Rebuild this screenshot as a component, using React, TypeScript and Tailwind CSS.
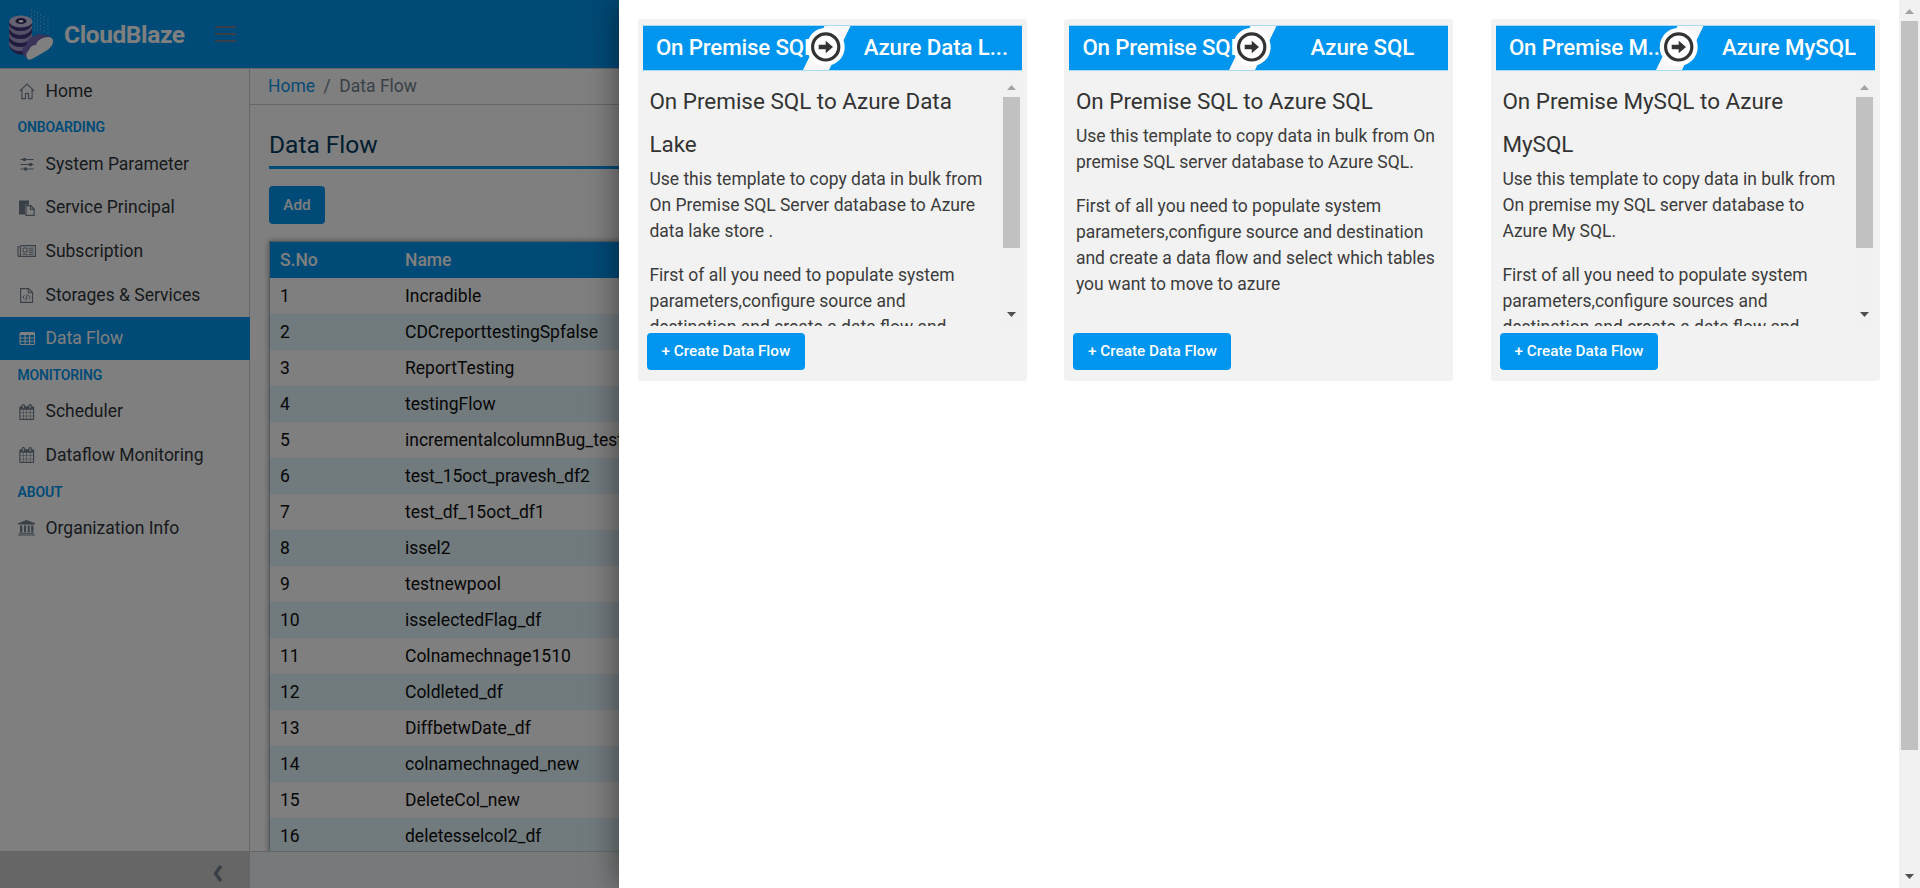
import type { ReactNode } from 'react';

const calendar =
  'M192 1664h288v-288h-288v288zm352 0h320v-288h-320v288zm-352-352h288v-320h-288v320zm352 0h320v-320h-320v320zm-352-384h288v-288h-288v288zm736 736h320v-288h-320v288zm-384-736h320v-288h-320v288zm768 736h288v-288h-288v288zm-384-352h320v-320h-320v320zm-352-864v-288q0-13-9.5-22.5t-22.5-9.5h-64q-13 0-22.5 9.5t-9.5 22.5v288q0 13 9.5 22.5t22.5 9.5h64q13 0 22.5-9.5t9.5-22.5zm736 864h288v-320h-288v320zm-384-384h320v-288h-320v288zm384 0h288v-288h-288v288zm32-480v-288q0-13-9.5-22.5t-22.5-9.5h-64q-13 0-22.5 9.5t-9.5 22.5v288q0 13 9.5 22.5t22.5 9.5h64q13 0 22.5-9.5t9.5-22.5zm384-64v1280q0 52-38 90t-90 38h-1408q-52 0-90-38t-38-90v-1280q0-52 38-90t90-38h128v-96q0-66 47-113t113-47h64q66 0 113 47t47 113v96h384v-96q0-66 47-113t113-47h64q66 0 113 47t47 113v96h128q52 0 90 38t38 90z';

const Svg = ({ children }: { children: ReactNode }) => (
  <svg viewBox="0 0 18 18" className="h-[18px] w-[18px] shrink-0 overflow-visible" fill="none" stroke="currentColor">
    {children}
  </svg>
);

const HomeIcon = () => (
  <Svg>
    <path d="M1.6 9.2 9 2l7.4 7.2M3.9 7.6v9h3.6v-5.1h3v5.1h3.6v-9" strokeWidth="1.1" />
  </Svg>
);
const SlidersIcon = () => (
  <Svg>
    <path d="M2.500 4.500h13M2.500 9.500h13M2.500 14h13" strokeWidth="1.200" />
    <path d="M5 3h3v3H5zM11 8h3v3h-3zM6 12.500h3v3H6z" fill="currentColor" stroke="none" />
  </Svg>
);
const PasteIcon = () => (
  <Svg>
    <path d="M1 1.500h10v4.300H7V15.500H1z" fill="currentColor" stroke="none" />
    <path d="M8 6.700h4.800l3.300 3.300v6.400H8zM12.400 6.900v3.500h3.600" strokeWidth="1.200" />
  </Svg>
);
const NewsIcon = () => (
  <Svg>
    <path d="M2.400 3.600h15v10.800H1.200q-1.200 0-1.200-1.400V4.800h2.400V13q0 1.400-1.200 1.400" strokeWidth="1.100" />
    <path d="M5 6h4v4H5zM10.600 6.200h5M10.600 8.200h5M10.600 10.200h5M4.600 12.200h4.900M10.600 12.200h5" strokeWidth="1" />
  </Svg>
);
const CodeFileIcon = () => (
  <Svg>
    <path d="M2.600 2.600h8l4 4v9.800h-12zM10.300 2.600v4.200h4.300" strokeWidth="1.100" />
    <path d="M6.500 9.200 4.800 11.200l1.700 2M10.700 9.200l1.700 2-1.700 2M9.200 8.400l-1.200 5.800" strokeWidth="1" />
  </Svg>
);
const TableIcon = () => (
  <Svg>
    <path
      fill="currentColor"
      stroke="none"
      fillRule="evenodd"
      d="M3 3h12.500q1.500 0 1.500 1.500v10q0 1.500-1.500 1.500H3q-1.500 0-1.500-1.500v-10Q1.500 3 3 3zM2.700 6v2.400h3.800V6zM7.600 6v2.400h3.500V6zM12.200 6v2.400H16V6zM2.700 9.400v2.300h3.800V9.400zM7.600 9.400v2.300h3.500V9.400zM12.200 9.400v2.300H16V9.400zM2.700 12.700v2.200h3.800v-2.200zM7.600 12.700v2.200h3.500v-2.200zM12.200 12.700v2.200H16v-2.200z"
    />
  </Svg>
);
const CalendarIcon = () => (
  <svg viewBox="64 0 1728 1792" className="h-[16px] w-[18px] shrink-0" fill="currentColor">
    <path d={calendar} />
  </svg>
);
const BankIcon = () => (
  <Svg>
    <path
      fill="currentColor"
      stroke="none"
      d="M8.500 1 17 4.300v1.200H0V4.300zM2 6.500h2.300v6.800H2zM6 6.500h2v6.800H6zM9.700 6.500h2v6.800h-2zM13.200 6.500h2.300v6.800h-2.300zM1 13.800h15v1H1zM0 15.400h17v1.200H0z"
    />
  </Svg>
);

const Item = ({ icon, label, active }: { icon: ReactNode; label: string; active?: boolean }) => (
  <div
    className={
      active
        ? '-mr-px flex h-[43.600px] items-center bg-[#0095ee] pl-[18px] text-white'
        : 'flex h-[43.600px] items-center pl-[18px] text-[#73818f]'
    }
  >
    {icon}
    <span className={active ? 'ml-[9.500px]' : 'ml-[9.500px] text-[#2f353a]'}>{label}</span>
  </div>
);

const Heading = ({ label }: { label: string }) => (
  <div className="flex h-[29.600px] items-center pl-[17.500px] text-[14px] font-semibold leading-none tracking-[-0.150px] text-[#0095ee]">{label}</div>
);

const rows = [
  'Incradible', 'CDCreporttestingSpfalse', 'ReportTesting', 'testingFlow', 'incrementalcolumnBug_test',
  'test_15oct_pravesh_df2', 'test_df_15oct_df1', 'issel2', 'testnewpool', 'isselectedFlag_df',
  'Colnamechnage1510', 'Coldleted_df', 'DiffbetwDate_df', 'colnamechnaged_new', 'DeleteCol_new', 'deletesselcol2_df',
];

const Up = () => (
  <svg viewBox="0 0 9 5" className="h-[5px] w-[9px]" fill="#a3a3a3"><path d="M0 5 4.500 0 9 5z" /></svg>
);
const Down = () => (
  <svg viewBox="0 0 9 5" className="h-[5px] w-[9px]" fill="#505050"><path d="M0 0 4.500 5 9 0z" /></svg>
);

const Scrollbar = ({ thumb }: { thumb: string }) => (
  <div className="flex h-full w-[21px] shrink-0 flex-col items-center justify-between bg-[#f1f1f1]">
    <div className="flex min-h-0 w-full flex-1 flex-col items-center">
      <div className="flex h-[21px] items-center pt-[2px]"><Up /></div>
      <div className={thumb} />
    </div>
    <div className="flex h-[21px] items-center pb-[2px]"><Down /></div>
  </div>
);

type CardProps = {
  from: string; to: string; title: string; lines: string[]; more: string[]; scroll?: boolean;
};

const Card = ({ from, to, title, lines, more, scroll }: CardProps) => (
  <div className="h-[362px] w-[389px] rounded-[3px] bg-[#f2f2f2] px-[5px] pt-[6px]">
    <div className="relative flex h-[46px] w-full border-y border-[#a9d9f6] bg-[#0095ee] text-[22.300px] font-medium leading-[42px] text-white">
      <div className="w-[176px] overflow-hidden whitespace-nowrap pl-[13px] tracking-[-0.150px]">{from}</div>
      <svg viewBox="0 0 48 44" className="absolute left-[160px] top-0 h-[44px] w-[48px]">
        <path d="M21.500 0H47.500L26 44H0z" fill="#f8f8f8" />
        <circle cx="22.700" cy="20.900" r="19" fill="#fff" />
        <circle cx="22.700" cy="20.900" r="13.100" fill="#fff" stroke="#333" strokeWidth="3.200" />
        <path d="M15.700 18.700h7v-4l7.300 6.300-7.300 6.300v-4h-7z" fill="#333" />
      </svg>
      <div className="ml-[32px] flex-1 whitespace-nowrap pr-px text-center tracking-[-0.100px]">{to}</div>
    </div>
    <div className="mt-[5px] flex h-[250px] overflow-hidden text-[17.500px] leading-[26.100px] text-[#3c3c3c]">
      <div className="flex-1 pl-[6.500px] pt-[3.500px]">
        <div className="text-[22.450px] leading-[43px] text-[#333]">{title.split('\n').map((t) => <div key={t}>{t}</div>)}</div>
        <div className="mb-[18.500px] whitespace-nowrap">{lines.map((t) => <div key={t}>{t}</div>)}</div>
        <div className="whitespace-nowrap">{more.map((t) => <div key={t}>{t}</div>)}</div>
      </div>
      {scroll && <Scrollbar thumb="h-[151px] w-[17px] bg-[#c1c1c1]" />}
    </div>
    <button className="ml-[4px] mt-[7px] block h-[37px] w-[158px] rounded-[4px] bg-[#0095ee] text-[15.300px] font-medium text-white">
      + Create Data Flow
    </button>
  </div>
);

export default function App() {
  return (
    <div className="relative h-[888px] w-[1920px] overflow-hidden bg-white font-[Roboto,sans-serif] text-[17.500px]">
      <div className="flex h-full flex-col">
        <header className="flex h-[69px] shrink-0 items-center border-b border-[#c8ced3] bg-[#0095ee]">
          <svg viewBox="0 0 46 52" className="ml-[9px] h-[52px] w-[46px]">
            <path d="M22.500 1v22M25.500 3v20M28.500 4v20M31.500 6v18M35 8v17M39 10v16" stroke="#4fb3ef" strokeWidth="1.100" strokeDasharray="2 1.500" />
            <path d="M0 12v26q3 8 13 9l10-5V12z" fill="#40387c" />
            <path d="M0 33q3 6 11.500 6T23 33v3q-3 7-11.500 7T0 37zM0 25q3 6 11.500 6T23 25v3.500q-3 6.500-11.500 6.500T0 28.500zM0 17q3 6 11.500 6T23 17v3.500q-3 6.500-11.500 6.500T0 20.500z" fill="#a9a1d0" />
            <ellipse cx="11.800" cy="13.500" rx="11.600" ry="6" fill="#cbc5e6" />
            <ellipse cx="12" cy="13" rx="5.500" ry="3" fill="#2b2462" />
            <ellipse cx="12" cy="13.200" rx="2.500" ry="1.300" fill="#fff" />
            <path d="M13 43q0-4 4-6 2-7 8-9 4-3 10-1 7 0 9 5L20 51q-5-2-7-8z" fill="#7468b4" />
            <path d="M18 50q-2-4 2-8 2-5 7-5 1-5 7-7 8-3 10 2 1 6-7 11l-14 8q-4 2-5-1z" fill="#fff" />
          </svg>
          <span className="ml-[9px] pt-[2px] text-[24.500px] font-bold tracking-[-0.400px] text-white">CloudBlaze</span>
          <div className="ml-[30px] flex w-[21px] flex-col gap-[5px]">
            <i className="h-[2px] bg-[#73818f]" /><i className="h-[2px] bg-[#73818f]" /><i className="h-[2px] bg-[#73818f]" />
          </div>
        </header>
        <div className="flex min-h-0 flex-1">
          <aside className="flex w-[250px] shrink-0 flex-col border-r border-[#c8ced3]">
            <div className="min-h-0 flex-1">
              <Item icon={<HomeIcon />} label="Home" />
              <Heading label="ONBOARDING" />
              <Item icon={<SlidersIcon />} label="System Parameter" />
              <Item icon={<PasteIcon />} label="Service Principal" />
              <Item icon={<NewsIcon />} label="Subscription" />
              <Item icon={<CodeFileIcon />} label="Storages &amp; Services" />
              <Item icon={<TableIcon />} label="Data Flow" active />
              <Heading label="MONITORING" />
              <Item icon={<CalendarIcon />} label="Scheduler" />
              <Item icon={<CalendarIcon />} label="Dataflow Monitoring" />
              <Heading label="ABOUT" />
              <Item icon={<BankIcon />} label="Organization Info" />
            </div>
            <div className="-mr-px flex h-[37px] items-center justify-end bg-[#cccccc] pr-[28px] pt-[7px]">
              <svg viewBox="0 0 9 17" className="h-[17px] w-[9px]" fill="none" stroke="#73818f" strokeWidth="3.500"><path d="M8 1 2.500 8.500 8 16" /></svg>
            </div>
          </aside>
          <main className="flex min-w-0 flex-1 flex-col">
            <div className="flex h-[36px] shrink-0 items-center border-b border-[#c8ced3] pl-[18px] text-[#73818f]">
              <span className="text-[#0e96ea]">Home</span>
              <span className="mx-[8.500px]">/</span>
              <span>Data Flow</span>
            </div>
            <div className="min-h-0 flex-1 overflow-hidden pl-[19px] pt-[23px]">
              <h1 className="h-[41px] border-b-[3px] border-[#0095ee] text-[24.500px] leading-[34px] text-[#003b5e]">Data Flow</h1>
              <button className="mt-[17px] block h-[38px] w-[56px] rounded-[4px] bg-[#0095ee] text-[15.300px] font-medium text-white">Add</button>
              <div className="mt-[17px] border-l border-t border-[#a4b7c1] text-[#0c0c0c] shadow-[0_0_6px_#0006]">
                <div className="flex h-[36px] items-center bg-[#0095ee] pl-[10px] font-medium text-white">
                  <span className="w-[125px]">S.No</span><span>Name</span>
                </div>
                {rows.map((name, i) => (
                  <div key={name} className={i % 2 ? 'flex h-[36px] items-center bg-[#e2f4fb] pl-[10px]' : 'flex h-[36px] items-center bg-white pl-[10px]'}>
                    <span className="w-[125px]">{i + 1}</span><span>{name}</span>
                  </div>
                ))}
              </div>
            </div>
            <footer className="h-[37px] shrink-0 border-t border-[#c8ced3] bg-[#f0f3f5]" />
          </main>
        </div>
      </div>
      <div className="absolute inset-0 flex justify-end bg-black/50">
        <div className="flex w-[1301px] bg-white shadow-[0_0_30px_rgba(0,0,0,0.5)]">
          <div className="flex flex-1 gap-[37.500px] pl-[18.900px] pt-[19px]">
            <Card
              scroll
              from="On Premise SQL"
              to="Azure Data L..."
              title={'On Premise SQL to Azure Data\nLake'}
              lines={['Use this template to copy data in bulk from', 'On Premise SQL Server database to Azure', 'data lake store .']}
              more={['First of all you need to populate system', 'parameters,configure source and', 'destination and create a data flow and']}
            />
            <Card
              from="On Premise SQL"
              to="Azure SQL"
              title="On Premise SQL to Azure SQL"
              lines={['Use this template to copy data in bulk from On', 'premise SQL server database to Azure SQL.']}
              more={['First of all you need to populate system', 'parameters,configure source and destination', 'and create a data flow and select which tables', 'you want to move to azure']}
            />
            <Card
              scroll
              from="On Premise M..."
              to="Azure MySQL"
              title={'On Premise MySQL to Azure\nMySQL'}
              lines={['Use this template to copy data in bulk from', 'On premise my SQL server database to', 'Azure My SQL.']}
              more={['First of all you need to populate system', 'parameters,configure sources and', 'destination and create a data flow and']}
            />
          </div>
          <Scrollbar thumb="h-[729px] w-[17px] bg-[#c1c1c1]" />
        </div>
      </div>
    </div>
  );
}
